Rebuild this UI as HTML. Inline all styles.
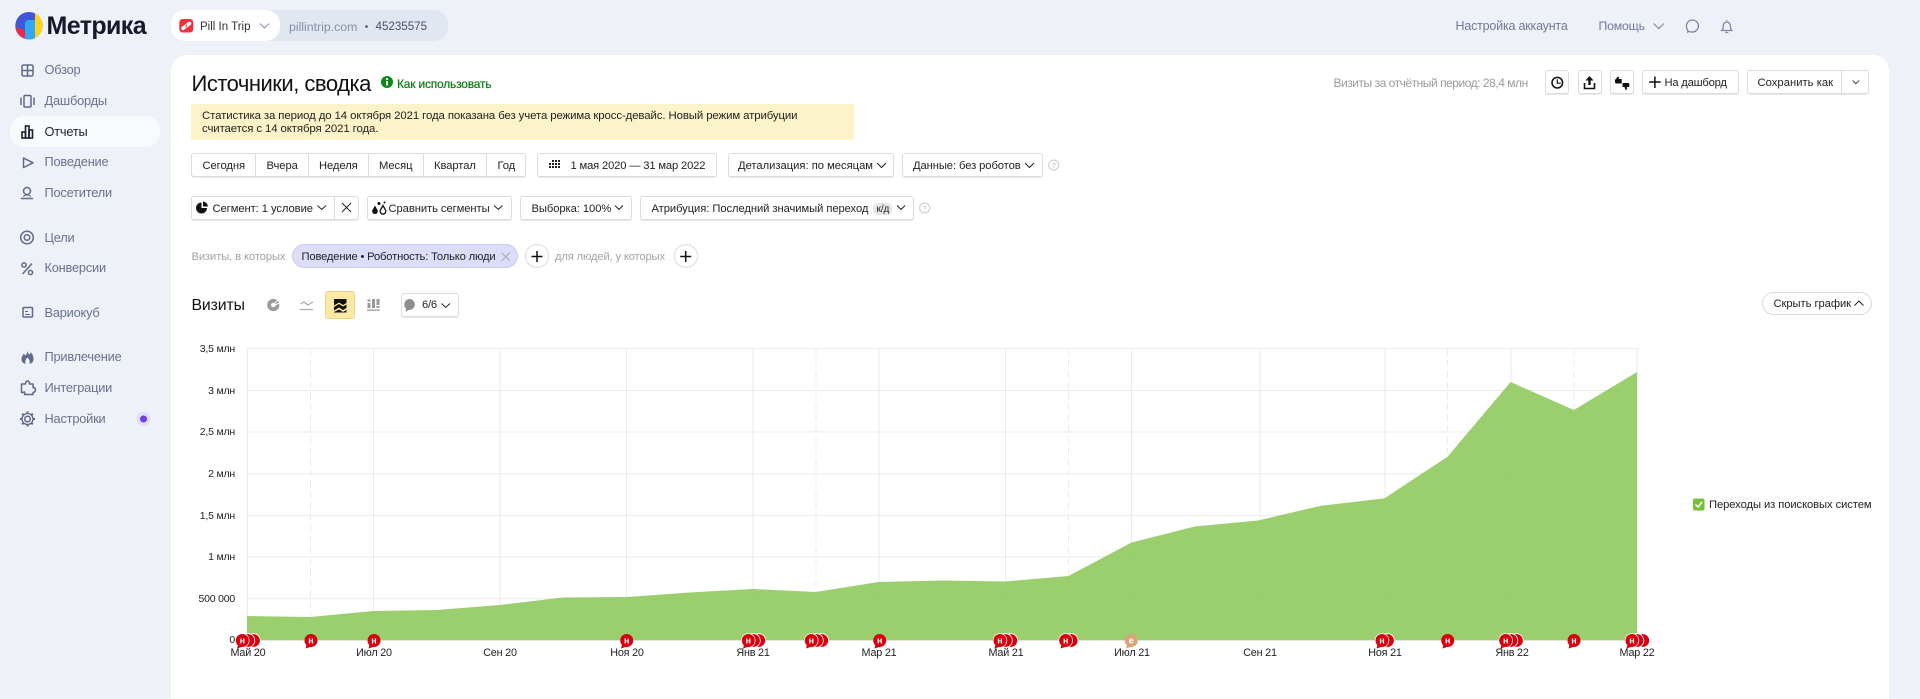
<!DOCTYPE html>
<html lang="ru"><head><meta charset="utf-8"><title>Источники, сводка</title>
<style>
html,body{margin:0;padding:0;width:1920px;height:699px;overflow:hidden;background:#eef1f7}
#r{position:relative;width:1920px;height:699px;overflow:hidden;font-family:"Liberation Sans",sans-serif;color:#222;filter:blur(.3px)}
#r div{position:absolute;box-sizing:border-box}
.t{position:absolute;white-space:nowrap;line-height:16px;font-size:11.2px;letter-spacing:-.06px}
.n{font-size:12.8px;color:#68728f;left:44.5px;letter-spacing:-.2px}
.b{background:#fff;border:1px solid #dcdcdc;border-radius:3px;box-shadow:0 1px 0 #e8e8e8}
.y{width:60px;left:175px;text-align:right;font-size:10.5px;color:#222;letter-spacing:-.2px}
.x{width:80px;text-align:center;font-size:10.8px;color:#222;top:645px;letter-spacing:-.2px}
svg{position:absolute;left:0;top:0}
</style></head><body><div id="r">
<div style="left:171px;top:55px;width:1718px;height:660px;background:#fff;border-radius:16px"></div>
<div style="left:10px;top:116px;width:150px;height:31px;background:#f8fafc;border-radius:14px"></div>
<div style="left:200px;top:10px;width:248px;height:31px;background:#e0e7f1;border-radius:14px"></div>
<div style="left:171px;top:10px;width:109px;height:31px;background:#fff;border-radius:14px"></div>
<div style="left:191px;top:104px;width:663px;height:36px;background:#fdf3c8"></div>

<div class="b" style="left:191px;top:153px;width:335px;height:24px"></div>
<div style="left:255px;top:153px;width:1px;height:24px;background:#dcdcdc"></div>
<div style="left:308px;top:153px;width:1px;height:24px;background:#dcdcdc"></div>
<div style="left:368px;top:153px;width:1px;height:24px;background:#dcdcdc"></div>
<div style="left:423px;top:153px;width:1px;height:24px;background:#dcdcdc"></div>
<div style="left:486px;top:153px;width:1px;height:24px;background:#dcdcdc"></div>
<div class="b" style="left:537px;top:153px;width:180px;height:24px"></div>
<div class="b" style="left:728px;top:153px;width:166px;height:24px"></div>
<div class="b" style="left:902px;top:153px;width:141px;height:24px"></div>

<div class="b" style="left:191px;top:196px;width:168px;height:24px"></div>
<div style="left:334px;top:196px;width:1px;height:24px;background:#dcdcdc"></div>
<div class="b" style="left:367px;top:196px;width:145px;height:24px"></div>
<div class="b" style="left:520px;top:196px;width:112px;height:24px"></div>
<div class="b" style="left:640px;top:196px;width:274px;height:24px"></div>
<div style="left:873px;top:203px;width:19px;height:12px;background:#e6e6e6;border-radius:5px"></div>

<div style="left:292px;top:244px;width:226px;height:24px;background:#dcdcfb;border:1px solid #cdcdf2;border-radius:12px"></div>
<div style="left:525px;top:244px;width:24px;height:24px;background:#fff;border:1px solid #dcdcdc;border-radius:12px"></div>
<div style="left:674px;top:244px;width:24px;height:24px;background:#fff;border:1px solid #dcdcdc;border-radius:12px"></div>

<div style="left:325px;top:291px;width:30px;height:28px;background:#fde9a4;border:1px solid #e8d48e;border-radius:3px"></div>
<div class="b" style="left:401px;top:293px;width:58px;height:24px"></div>
<div style="left:1762px;top:292px;width:110px;height:23px;background:#fff;border:1px solid #d9d9d9;border-radius:12px"></div>

<div class="b" style="left:1545px;top:70px;width:24px;height:24px"></div>
<div class="b" style="left:1578px;top:70px;width:24px;height:24px"></div>
<div class="b" style="left:1610px;top:70px;width:24px;height:24px"></div>
<div class="b" style="left:1642px;top:70px;width:97px;height:24px"></div>
<div class="b" style="left:1747px;top:70px;width:122px;height:24px"></div>
<div style="left:1841px;top:70px;width:1px;height:24px;background:#dcdcdc"></div>

<svg width="1920" height="699" viewBox="0 0 1920 699">
<defs><clipPath id="lg"><circle cx="29" cy="25.7" r="13.7"/></clipPath></defs>
<!-- logo -->
<g clip-path="url(#lg)">
<rect x="15" y="12" width="28" height="28" fill="#3f59d6"/>
<rect x="35" y="12" width="8" height="28" fill="#ffd21e"/>
<path d="M33 12H43V40H35V14Q35 12 33 12Z" fill="#ffd21e"/>
<path d="M15 27.500L25 30V40H15Z" fill="#f0264a"/>
<path d="M25 24Q25 20 29 20H35V40H25Z" fill="#2ea9f5"/>
</g>
<!-- site icon -->
<rect x="179.300" y="19" width="14" height="13.500" rx="3.500" fill="#f0303c"/>
<path d="M183 28.300L189.500 23.500" stroke="#fff" stroke-width="3.600" stroke-linecap="round"/>
<path d="M185.500 27.500L187 24.500" stroke="#f0303c" stroke-width="1"/>
<!-- pill chevron -->
<path d="M260 23.500L264.500 28L269 23.500" fill="none" stroke="#8b95ac" stroke-width="1.100"/>
<circle cx="366.500" cy="26.500" r="1.300" fill="#444c5e"/>
<!-- nav icons -->
<g fill="none" stroke="#5f6a88" stroke-width="1.500">
<rect x="22" y="65" width="11" height="11" rx="1.500"/><path d="M27.500 65V76M22 70.500H33"/>
<rect x="24" y="95.500" width="7" height="11.500" rx="1"/><path d="M21 97.500V105M34 97.500V105"/>
<path d="M23.500 158V167.500L33 162.800Z" stroke-linejoin="round"/>
<circle cx="27" cy="191" r="3.500"/><path d="M21.500 198.500H32.500" stroke-linecap="round"/><path d="M23 196.500Q27 193.500 31 196.500" stroke-width="1"/>
<circle cx="27" cy="237.500" r="6.300"/><circle cx="27" cy="237.500" r="2.800"/>
<path d="M22.500 274L32 263.500"/><circle cx="24" cy="265" r="2.100"/><circle cx="30.500" cy="272.500" r="2.100"/>
<rect x="23" y="307.500" width="9.500" height="9.500" rx="1"/><path d="M25 311.500H28M25 314.500H30" stroke-width="1.100"/>
<path d="M23 392.500H21.500V384H25.500Q25.500 381 27.500 381T29.500 384H33V387.500Q35.500 387.500 35.500 389.700T33 392.500V394.500H24.500Q25.500 391 23 392.500Z" stroke-linejoin="round"/>
<circle cx="27.500" cy="419" r="2.800"/><circle cx="27.500" cy="419" r="5.500" stroke-width="1.300"/>
<path d="M27.500 411.500V413.500M27.500 424.500V426.500M20 419H22M33 419H35M22.200 413.700L23.500 415M31.500 423L32.800 424.300M22.200 424.300L23.500 423M31.500 415L32.800 413.700" stroke-width="2"/>
</g>
<g fill="none" stroke="#1d2130" stroke-width="1.600">
<rect x="22" y="132" width="3.500" height="6" /><rect x="25.500" y="126" width="3.500" height="12"/><rect x="29" y="130" width="3.500" height="8"/>
</g>
<path d="M27 350.500Q28 354 30 354.500Q30.500 353 30.500 352Q33.500 355 33.500 359Q33.500 364 27.500 364Q21.500 364 21.500 359Q21.500 356.500 24 353.500Q24.500 355 25.500 355.500Q27.500 353.500 27 350.500Z" fill="#5f6a88"/>
<path d="M25.500 364Q24.500 360 27.500 357.500Q30.500 360 29.500 364Z" fill="#eef1f7"/>
<circle cx="143.500" cy="419" r="7" fill="#e2dcf8"/><circle cx="143.500" cy="419" r="3.500" fill="#6b3fe8"/>
<!-- header right -->
<path d="M1653.500 23.500L1658.700 28.500L1664 23.500" fill="none" stroke="#7f8aa3" stroke-width="1.200"/>
<g fill="none" stroke="#7c87a2" stroke-width="1.300">
<path transform="translate(47.400 0)" d="M1641 31.500Q1639 28.500 1639 26A6 6 0 1 1 1645 32Q1642.500 32 1641 31.500L1639.500 32.500Z"/>
<path transform="translate(51.300 0)" d="M1670.500 30.500Q1672 29 1672 25.500A3.500 3.500 0 0 1 1679 25.500Q1679 29 1680.500 30.500ZM1675.500 21V20M1674 32.500H1677"/>
</g>
<!-- info -->
<circle cx="387" cy="82" r="6" fill="#0a8a14"/><rect x="386" y="81" width="2" height="4.500" fill="#fff"/><rect x="386" y="78" width="2" height="2" fill="#fff"/>
<!-- toolbar icons -->
<circle cx="1557.300" cy="82.700" r="5.300" fill="none" stroke="#111" stroke-width="1.500"/><path d="M1557.300 79.200V83.200H1560.800" fill="none" stroke="#111" stroke-width="1.200"/>
<g transform="translate(34.500 0)"><path d="M1550 83V88.500H1560V83" fill="none" stroke="#111" stroke-width="1.600"/><path d="M1555 76L1559 80.500H1556.200V85H1553.800V80.500H1551Z" fill="#111"/></g>
<path d="M1615 80A1 1 0 0 1 1616 79L1617.500 76.800L1619 77L1618.800 79H1621.700V83.500H1616.500Q1615 83.500 1615 82Z" fill="#111"/>
<path d="M1629.300 84A1 1 0 0 0 1628.300 83H1622.500V87H1624.500L1625.500 90L1627 89.500L1626.800 87H1628.500Q1629.300 87 1629.300 86Z" fill="#111"/>
<path d="M1649.200 82H1660.700M1654.900 76.500V88" stroke="#111" stroke-width="1.500"/>
<path d="M1852.600 80.500L1855.800 83.700L1859.100 80.500" fill="none" stroke="#444" stroke-width="1"/>
<!-- row1 -->
<g fill="#222"><rect x="549" y="163" width="2" height="2"/><rect x="549" y="166" width="2" height="2"/><rect x="552" y="160" width="2" height="2"/><rect x="552" y="163" width="2" height="2"/><rect x="552" y="166" width="2" height="2"/><rect x="555" y="160" width="2" height="2"/><rect x="555" y="163" width="2" height="2"/><rect x="555" y="166" width="2" height="2"/><rect x="558" y="160" width="2" height="2"/><rect x="558" y="163" width="2" height="2"/><rect x="558" y="166" width="2" height="2"/></g>
<g fill="none" stroke="#222" stroke-width="1">
<path d="M877 163L881.500 167.500L886 163M1025 163L1029.500 167.500L1034 163"/>
<path d="M317.500 205.500L321.700 209.500L326 205.500M494 205.500L498.300 209.500L502.500 205.500M615 205.500L619 209.500L623 205.500M897 205.500L901 209.500L905 205.500"/>
<path d="M441.500 303.500L445.700 307.500L450 303.500"/>
<path d="M1854.500 305.500L1859 301L1863.500 305.500"/>
<path d="M342 203L351 212" stroke-width="1"/><path d="M351 203L342 212" stroke-width="1"/>
</g>
<!-- help -->
<g fill="none" stroke="#ccc" stroke-width="1"><circle cx="1053.700" cy="165" r="5"/><circle cx="924.700" cy="208" r="5"/></g>
<text x="1053.700" y="168" font-size="7.500" text-anchor="middle" fill="#bbb" font-family="Liberation Sans">?</text>
<text x="924.700" y="211" font-size="7.500" text-anchor="middle" fill="#bbb" font-family="Liberation Sans">?</text>
<!-- seg pie -->
<path d="M201.500 202.500V208H207A5.500 5.500 0 1 1 201.500 202.500Z" fill="#111"/><path d="M203 201.500A5.500 5.500 0 0 1 208 206.500H203Z" fill="#111"/>
<!-- compare icon -->
<path d="M375 205.500L377.500 210A2.800 2.800 0 1 1 372.500 210Z" fill="#111"/>
<path d="M383 205.500L385.500 210A2.800 2.800 0 1 1 380.500 210Z" fill="#fff" stroke="#111" stroke-width="1.300"/>
<circle cx="379" cy="203.500" r="1.500" fill="#111"/><circle cx="384.500" cy="202.500" r="1" fill="#111"/>
<!-- chip x + plus -->
<path d="M501.500 252.500L510 261M510 252.500L501.500 261" stroke="#aaa" stroke-width="1" fill="none"/>
<path d="M531.500 256.500H542.500M537 251V262M680.200 256.500H691.200M685.700 251V262" stroke="#111" stroke-width="1.500" fill="none"/>
<!-- chart type icons -->
<circle cx="273.300" cy="305" r="4.200" fill="none" stroke="#9a9a9a" stroke-width="3.800"/>
<path d="M274 304L279.500 298.500M275 305L280.500 302.500" stroke="#fff" stroke-width="1"/>
<g fill="none" stroke="#aaa" stroke-width="1.200"><path d="M300.500 304L304 302L308 305L313 302"/><path d="M300 309.500H313"/></g>
<path d="M334 299H346.500V303L343 305L339 302.500L334 305.500Z" fill="#111"/><path d="M334 307L339 304L343 306.500L346.500 304.500V308L343 310L339 307.500L334 310.500Z" fill="#111"/>
<path d="M334 312L339 309.500L343 312L346.500 310V312.500H334Z" fill="#111"/>
<g fill="#9a9a9a"><rect x="367.500" y="303" width="3" height="5"/><rect x="367.500" y="299.500" width="3" height="2"/><rect x="372" y="299" width="3" height="9"/><rect x="376.500" y="299" width="3" height="6"/><rect x="376.500" y="306" width="3" height="2"/><rect x="367" y="309.500" width="13" height="1.300"/></g>
<path d="M410 299A5.500 5.500 0 1 1 408.500 310L405.500 312L406 308.500A5.500 5.500 0 0 1 410 299Z" fill="#8f8f8f"/>
<!-- grid -->
<g stroke="#ebebeb" stroke-width="1" fill="none">
<path d="M247 348.500H1637M247 390.500H1637M247 432H1637M247 473.700H1637M247 515.400H1637M247 557H1637M247 598.800H1637"/>
<path d="M247.500 348.500V640M373.500 348.500V640M500 348.500V640M626.500 348.500V640M753 348.500V640M879 348.500V640M1005.500 348.500V640M1131.500 348.500V640M1260 348.500V640M1385 348.500V640M1511 348.500V640M1637 348.500V640"/>
<path stroke-dasharray="7 4" d="M310.500 348.500V640M816 348.500V640M1068.500 348.500V640M1447.500 348.500V640M1574 348.500V640"/>
</g>
<path d="M247 616L310.200 617L373.400 611L436.500 610L499.700 605L562.900 597.500L626.100 597L689.300 592.500L752.500 589L815.600 592L878.800 582L942 580.500L1005.200 581.500L1068.400 576L1131.500 542.500L1194.700 526.500L1257.900 520.500L1321.100 505.700L1384.300 498.400L1447.500 456.700L1510.600 382L1573.800 410L1637 372V640H247Z" fill="#90ca5d" fill-opacity=".9"/>
<path d="M247 640.500H1637" stroke="#dfe8d6" stroke-width="1"/>
<!-- flags -->
<g font-family="Liberation Sans" font-size="9" font-weight="700" fill="#fff" text-anchor="middle" stroke-width=".8">
<g fill="#d6000f" stroke="#fff">
<circle cx="253.500" cy="640.500" r="6.800"/><circle cx="248" cy="640.500" r="6.800"/>
<circle cx="758.800" cy="640.500" r="6.800"/><circle cx="753.500" cy="640.500" r="6.800"/>
<circle cx="821.800" cy="640.500" r="6.800"/><circle cx="816.500" cy="640.500" r="6.800"/>
<circle cx="1010.800" cy="640.500" r="6.800"/><circle cx="1005.500" cy="640.500" r="6.800"/>
<circle cx="1071.200" cy="640.500" r="6.800"/>
<circle cx="1387.500" cy="640.500" r="6.800"/>
<circle cx="1516.500" cy="640.500" r="6.800"/><circle cx="1511" cy="640.500" r="6.800"/>
<circle cx="1642.800" cy="640.500" r="6.800"/><circle cx="1637" cy="640.500" r="6.800"/>
</g>
<g fill="#fff" stroke="none">
<circle cx="242.300" cy="640.500" r="7.200"/><circle cx="748.300" cy="640.500" r="7.200"/><circle cx="811.300" cy="640.500" r="7.200"/><circle cx="1000" cy="640.500" r="7.200"/><circle cx="1065.700" cy="640.500" r="7.200"/><circle cx="1382" cy="640.500" r="7.200"/><circle cx="1505.700" cy="640.500" r="7.200"/><circle cx="1632" cy="640.500" r="7.200"/>
</g>
<g fill="#d6000f" stroke="none">
<circle cx="242.300" cy="640.500" r="6.500"/><path d="M238 645L237 648.500L243 646.500Z"/>
<circle cx="311" cy="640.500" r="6.500"/><path d="M306.500 645L305.500 648.500L311.500 646.500Z"/>
<circle cx="374" cy="640.500" r="6.500"/><path d="M369.500 645L368.500 648.500L374.500 646.500Z"/>
<circle cx="626.700" cy="640.500" r="6.500"/><path d="M622 645L621 648.500L627 646.500Z"/>
<circle cx="748.300" cy="640.500" r="6.500"/><path d="M744 645L743 648.500L749 646.500Z"/>
<circle cx="811.300" cy="640.500" r="6.500"/><path d="M807 645L806 648.500L812 646.500Z"/>
<circle cx="879.700" cy="640.500" r="6.500"/><path d="M875.500 645L874.500 648.500L880.500 646.500Z"/>
<circle cx="1000" cy="640.500" r="6.500"/><path d="M995.500 645L994.500 648.500L1000.500 646.500Z"/>
<circle cx="1065.700" cy="640.500" r="6.500"/><path d="M1061.500 645L1060.500 648.500L1066.500 646.500Z"/>
<circle cx="1382" cy="640.500" r="6.500"/><path d="M1377.500 645L1376.500 648.500L1382.500 646.500Z"/>
<circle cx="1447.700" cy="640.500" r="6.500"/><path d="M1443.500 645L1442.500 648.500L1448.500 646.500Z"/>
<circle cx="1505.700" cy="640.500" r="6.500"/><path d="M1501.500 645L1500.500 648.500L1506.500 646.500Z"/>
<circle cx="1574" cy="640.500" r="6.500"/><path d="M1569.500 645L1568.500 648.500L1574.500 646.500Z"/>
<circle cx="1632" cy="640.500" r="6.500"/><path d="M1627.500 645L1626.500 648.500L1632.500 646.500Z"/>
</g>
<g fill="#d9a47c" stroke="none"><circle cx="1131.300" cy="640.500" r="6.500"/><path d="M1127 645L1126 648.500L1132 646.500Z"/></g>
<text x="242.300" y="643.500">н</text><text x="311" y="643.500">н</text><text x="374" y="643.500">н</text><text x="626.700" y="643.500">н</text><text x="748.300" y="643.500">н</text><text x="811.300" y="643.500">н</text><text x="879.700" y="643.500">н</text><text x="1000" y="643.500">н</text><text x="1065.700" y="643.500">н</text><text x="1131.300" y="643.500">е</text><text x="1382" y="643.500">н</text><text x="1447.700" y="643.500">н</text><text x="1505.700" y="643.500">н</text><text x="1574" y="643.500">н</text><text x="1632" y="643.500">н</text>
</g>
<!-- legend -->
<rect x="1693" y="498.500" width="11.500" height="12" rx="2" fill="#78bf3c"/>
<path d="M1695.500 504.500L1698 507L1702 502" fill="none" stroke="#fff" stroke-width="1.500"/>
</svg>

<span class="t" style="left:46.500px;top:10px;font-size:25px;line-height:32px;font-weight:700;color:#15192a;letter-spacing:-.6px">Метрика</span>
<span class="t" style="left:200px;top:19px;font-size:11.500px;letter-spacing:0;color:#333">Pill In Trip</span>
<span class="t" style="left:289px;top:19px;font-size:12.300px;letter-spacing:0;color:#8490a8">pillintrip.com</span>
<span class="t" style="left:375.500px;top:19px;font-size:11.600px;letter-spacing:0;color:#49526a">45235575</span>
<span class="t n" style="top:62px">Обзор</span>
<span class="t n" style="top:93px">Дашборды</span>
<span class="t n" style="top:123.500px;color:#1f2433">Отчеты</span>
<span class="t n" style="top:154px">Поведение</span>
<span class="t n" style="top:185px">Посетители</span>
<span class="t n" style="top:229.500px">Цели</span>
<span class="t n" style="top:260px">Конверсии</span>
<span class="t n" style="top:304.500px">Вариокуб</span>
<span class="t n" style="top:349px">Привлечение</span>
<span class="t n" style="top:380px">Интеграции</span>
<span class="t n" style="top:411px">Настройки</span>

<span class="t" style="left:1455.500px;top:18px;font-size:12.500px;letter-spacing:-.2px;color:#6f7a96">Настройка аккаунта</span>
<span class="t" style="left:1598.500px;top:18px;font-size:12.300px;letter-spacing:-.2px;color:#6f7a96">Помощь</span>

<span class="t" style="left:191.500px;top:71px;font-size:22px;line-height:26px;letter-spacing:-.5px;color:#111">Источники, сводка</span>
<span class="t" style="left:397px;top:75.500px;font-size:12px;color:#0a7d13;letter-spacing:-.2px;-webkit-text-stroke:.2px #0a7d13">Как использовать</span>
<span class="t" style="left:1333.500px;top:74.500px;font-size:12px;color:#9a9a9a;letter-spacing:-.47px">Визиты за отчётный период: 28,4 млн</span>
<span class="t" style="left:1664.500px;top:74.500px;letter-spacing:-.2px">На дашборд</span>
<span class="t" style="left:1757.500px;top:74.500px;letter-spacing:.05px">Сохранить как</span>

<span class="t" style="left:202px;top:110px;font-size:11.400px;line-height:13px;color:#222;letter-spacing:-.1px">Статистика за период до 14 октября 2021 года показана без учета режима кросс-девайс. Новый режим атрибуции<br>считается с 14 октября 2021 года.</span>

<span class="t" style="left:202.500px;top:158px">Сегодня</span>
<span class="t" style="left:266.500px;top:158px">Вчера</span>
<span class="t" style="left:319px;top:158px">Неделя</span>
<span class="t" style="left:379px;top:158px">Месяц</span>
<span class="t" style="left:434px;top:158px">Квартал</span>
<span class="t" style="left:497.500px;top:158px">Год</span>
<span class="t" style="left:570.500px;top:158px;letter-spacing:-.15px">1 мая 2020 — 31 мар 2022</span>
<span class="t" style="left:738px;top:158px;letter-spacing:0">Детализация: по месяцам</span>
<span class="t" style="left:913px;top:158px;letter-spacing:-.08px">Данные: без роботов</span>

<span class="t" style="left:212.500px;top:201px">Сегмент: 1 условие</span>
<span class="t" style="left:388.500px;top:201px">Сравнить сегменты</span>
<span class="t" style="left:531.500px;top:201px">Выборка: 100%</span>
<span class="t" style="left:651.500px;top:201px">Атрибуция: Последний значимый переход</span>
<span class="t" style="left:876.500px;top:202px;font-size:10px">к/д</span>

<span class="t" style="left:191.500px;top:249px;color:#a3a3a3;letter-spacing:-.1px">Визиты, в которых</span>
<span class="t" style="left:301.500px;top:249px;letter-spacing:-.16px">Поведение • Роботность: Только люди</span>
<span class="t" style="left:555px;top:249px;color:#a3a3a3;letter-spacing:-.15px">для людей, у которых</span>

<span class="t" style="left:191.500px;top:297px;font-size:15.800px;line-height:18px;letter-spacing:-.1px;color:#111">Визиты</span>
<span class="t" style="left:422px;top:297px;letter-spacing:-.2px">6/6</span>
<span class="t" style="left:1773.500px;top:296px;letter-spacing:-.05px">Скрыть график</span>
<span class="t" style="left:1709px;top:496.500px;letter-spacing:-.07px">Переходы из поисковых систем</span>

<span class="t y" style="top:341px">3,5 млн</span>
<span class="t y" style="top:382.500px">3 млн</span>
<span class="t y" style="top:424px">2,5 млн</span>
<span class="t y" style="top:466px">2 млн</span>
<span class="t y" style="top:507.500px">1,5 млн</span>
<span class="t y" style="top:549px">1 млн</span>
<span class="t y" style="top:591px">500 000</span>
<span class="t y" style="top:632px">0</span>

<span class="t x" style="left:208px">Май 20</span>
<span class="t x" style="left:334px">Июл 20</span>
<span class="t x" style="left:460px">Сен 20</span>
<span class="t x" style="left:587px">Ноя 20</span>
<span class="t x" style="left:713px">Янв 21</span>
<span class="t x" style="left:839px">Мар 21</span>
<span class="t x" style="left:966px">Май 21</span>
<span class="t x" style="left:1092px">Июл 21</span>
<span class="t x" style="left:1220px">Сен 21</span>
<span class="t x" style="left:1345px">Ноя 21</span>
<span class="t x" style="left:1472px">Янв 22</span>
<span class="t x" style="left:1597px">Мар 22</span>
</div></body></html>
